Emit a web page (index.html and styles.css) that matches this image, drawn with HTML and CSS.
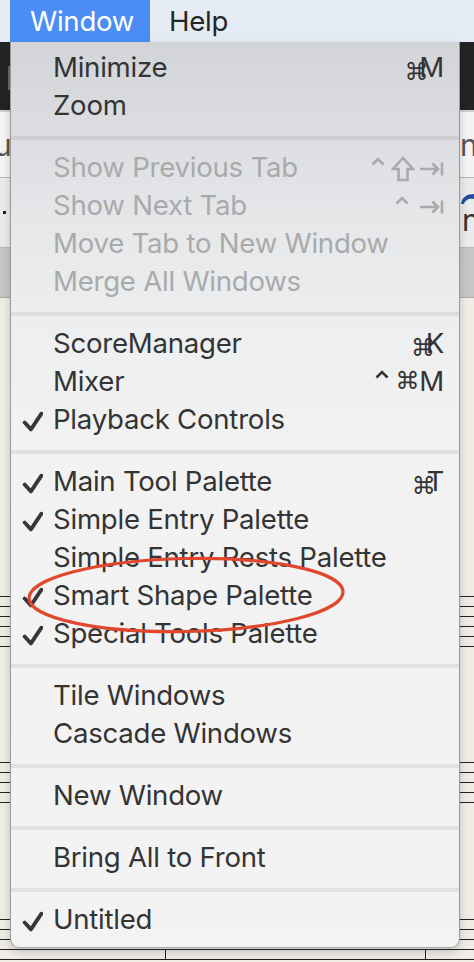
FILE: index.html
```html
<!DOCTYPE html>
<html>
<head>
<meta charset="utf-8">
<link rel="stylesheet" href="styles.css">
</head>
<body>
<div class="menubar">
  <div class="mb-item active">Window</div>
  <div class="mb-item">Help</div>
</div>

<div class="app">
  <div class="toolbar"><div class="tb-knob"></div></div>
  <div class="tabbar">
    <span class="edge-left">u</span>
    <span class="edge-right">ni</span>
  </div>
  <div class="row2">
    <span class="dot"></span>
    <span class="edge-right r2">
      <svg class="blue" width="14" height="14" viewBox="0 0 14 14"><path d="M1 13 C2 6 7 3 14 3 L14 8 C9 7 5 9 4 13 Z" fill="#1f4f9c"/></svg>
      <span class="n">n</span>
    </span>
  </div>
  <div class="grayband"></div>
  <div class="paper">
    <div class="staff s1"></div>
    <div class="staff s2"></div>
    <div class="staff s3"></div>
  </div>
</div>

<div class="menu">
  <div class="item"><span class="chk"></span><span class="label">Minimize</span><span class="sc"><span class="cmd low">⌘</span><span class="k">M</span></span></div>
  <div class="item"><span class="chk"></span><span class="label">Zoom</span><span class="sc"></span></div>
  <div class="sep"></div>
  <div class="item dis"><span class="chk"></span><span class="label">Show Previous Tab</span><span class="sc">
    <svg class="caret" viewBox="0 0 14 9"><path d="M1.5 7.5 L7 2 L12.5 7.5"/></svg>
    <svg class="shift" viewBox="0 0 24 26"><path d="M12 2 L22 13 L16.5 13 L16.5 24 L7.5 24 L7.5 13 L2 13 Z"/></svg>
    <svg class="tab" viewBox="0 0 25 16"><path d="M1 8 L19 8 M13.5 2.5 L19 8 L13.5 13.5 M23 1.5 L23 14.5"/></svg>
  </span></div>
  <div class="item dis"><span class="chk"></span><span class="label">Show Next Tab</span><span class="sc">
    <svg class="caret next" viewBox="0 0 14 9"><path d="M1.5 7.5 L7 2 L12.5 7.5"/></svg>
    <svg class="tab" viewBox="0 0 25 16"><path d="M1 8 L19 8 M13.5 2.5 L19 8 L13.5 13.5 M23 1.5 L23 14.5"/></svg>
  </span></div>
  <div class="item dis"><span class="chk"></span><span class="label">Move Tab to New Window</span><span class="sc"></span></div>
  <div class="item dis"><span class="chk"></span><span class="label">Merge All Windows</span><span class="sc"></span></div>
  <div class="sep"></div>
  <div class="item"><span class="chk"></span><span class="label">ScoreManager</span><span class="sc"><span class="cmd low">⌘</span><span class="k">K</span></span></div>
  <div class="item"><span class="chk"></span><span class="label">Mixer</span><span class="sc">
    <svg class="caret dark" viewBox="0 0 14 9"><path d="M1.5 7.5 L7 2 L12.5 7.5"/></svg>
    <span class="cmd">⌘</span><span class="k">M</span></span></div>
  <div class="item"><span class="chk"><svg viewBox="0 0 20 20"><path d="M2.5 11 L8.5 17.5 L18.5 2.5"/></svg></span><span class="label">Playback Controls</span><span class="sc"></span></div>
  <div class="sep"></div>
  <div class="item"><span class="chk"><svg viewBox="0 0 20 20"><path d="M2.5 11 L8.5 17.5 L18.5 2.5"/></svg></span><span class="label">Main Tool Palette</span><span class="sc"><span class="cmd low">⌘</span><span class="k">T</span></span></div>
  <div class="item"><span class="chk"><svg viewBox="0 0 20 20"><path d="M2.5 11 L8.5 17.5 L18.5 2.5"/></svg></span><span class="label">Simple Entry Palette</span><span class="sc"></span></div>
  <div class="item"><span class="chk"></span><span class="label">Simple Entry Rests Palette</span><span class="sc"></span></div>
  <div class="item"><span class="chk"><svg viewBox="0 0 20 20"><path d="M2.5 11 L8.5 17.5 L18.5 2.5"/></svg></span><span class="label">Smart Shape Palette</span><span class="sc"></span></div>
  <div class="item"><span class="chk"><svg viewBox="0 0 20 20"><path d="M2.5 11 L8.5 17.5 L18.5 2.5"/></svg></span><span class="label">Special Tools Palette</span><span class="sc"></span></div>
  <div class="sep"></div>
  <div class="item"><span class="chk"></span><span class="label">Tile Windows</span><span class="sc"></span></div>
  <div class="item"><span class="chk"></span><span class="label">Cascade Windows</span><span class="sc"></span></div>
  <div class="sep"></div>
  <div class="item"><span class="chk"></span><span class="label">New Window</span><span class="sc"></span></div>
  <div class="sep"></div>
  <div class="item"><span class="chk"></span><span class="label">Bring All to Front</span><span class="sc"></span></div>
  <div class="sep"></div>
  <div class="item"><span class="chk"><svg viewBox="0 0 20 20"><path d="M2.5 11 L8.5 17.5 L18.5 2.5"/></svg></span><span class="label">Untitled</span><span class="sc"></span></div>
</div>

<svg class="circle" width="330" height="90" viewBox="0 0 330 90">
  <ellipse cx="163" cy="45" rx="157" ry="36.5" transform="rotate(-1.2 163 45)" fill="none" stroke="#e0472c" stroke-width="3.2"/>
</svg>
</body>
</html>
```

FILE: styles.css
```css
* { box-sizing: border-box; }
html, body {
  margin: 0;
  padding: 0;
  width: 474px;
  height: 962px;
  overflow: hidden;
  font-family: "Inter", "Liberation Sans", sans-serif;
  -webkit-font-smoothing: antialiased;
}
body { position: relative; background: #efede6; }

/* menu bar */
.menubar {
  height: 42px;
  background: #e5ebf4;
  display: flex;
  padding-left: 10px;
}
.mb-item {
  height: 42px;
  line-height: 42px;
  font-size: 27.6px;
  letter-spacing: -0.25px;
  color: #262626;
  padding: 0 19px;
}
.mb-item.active {
  background: #4b8df5;
  color: #fff;
  padding: 0 20px;
  width: 140px;
}

/* application behind the menu */
.app { display: flex; flex-direction: column; }
.toolbar {
  height: 68px;
  background: #242424;
  padding-top: 24px;
}
.tb-knob { width: 10px; height: 24px; border-right: 2px solid #6a6a6a; }
.tabbar {
  height: 68px;
  background: #f4f4f4;
  border-top: 2px solid #cfcfcf;
  border-bottom: 1px solid #b4b4b4;
  display: flex;
  justify-content: space-between;
  align-items: center;
  font-size: 30px;
  color: #555;
  white-space: nowrap;
}
.edge-left { margin-left: -6px; }
.edge-right { width: 14px; overflow: visible; }
.row2 {
  height: 70px;
  background: #ebebeb;
  border-bottom: 1px solid #b9b9b9;
  display: flex;
  justify-content: space-between;
  align-items: center;
  font-size: 30px;
  color: #333;
  white-space: nowrap;
}
.dot { width: 3px; height: 3px; background: #222; margin-left: 3px; }
.r2 { display: flex; flex-direction: column; align-items: flex-start; }
.n { line-height: 30px; margin-left: 2px; }
.grayband { height: 50px; background: #c7c7c7; border-bottom: 1px solid #aaa; }
.paper {
  flex: 1;
  background: #efede6;
  display: flex;
  flex-direction: column;
}
.staff {
  height: 41px;
  flex-shrink: 0;
  background: repeating-linear-gradient(to bottom, #222 0 1px, transparent 1px 10px);
}
.s1 { margin-top: 298px; height: 51px; }
.s2 { margin-top: 115px; }
.s3 {
  margin-top: 116px;
  background:
    linear-gradient(#222, #222) 165px 30px / 1px 20px no-repeat,
    linear-gradient(#222, #222) 425px 30px / 1px 20px no-repeat,
    repeating-linear-gradient(to bottom, #222 0 1px, transparent 1px 10px);
}

/* dropdown menu */
.menu {
  position: absolute;
  left: 10px;
  top: 42px;
  width: 450px;
  height: 906px;
  padding: 8px 0;
  background: linear-gradient(to bottom, #d3d4d7 0px, #dcdde0 90px, #e7e8ea 190px, #eeeff0 300px, #f2f2f2 420px, #f3f3f3 100%);
  border-left: 1px solid #9a9a9a;
  border-right: 1px solid #9a9a9a;
  border-bottom: 1px solid #a8a8a8;
  border-radius: 0 0 9px 9px;
  box-shadow: 0 4px 10px rgba(0,0,0,0.18);
  display: flex;
  flex-direction: column;
}
.item {
  height: 38px;
  flex-shrink: 0;
  display: grid;
  grid-template-columns: 42px 1fr auto;
  align-items: center;
  padding-right: 15px;
  font-size: 27.6px;
  letter-spacing: -0.25px;
  color: #343434;
  white-space: nowrap;
}
.item.dis { color: #a9aaac; }
.sep {
  flex-shrink: 0;
  height: 4px;
  margin: 10px 0;
  background: rgba(0, 0, 0, 0.065);
}
.label { line-height: 38px; position: relative; top: -2px; }
.chk { display: flex; align-items: center; padding-left: 11px; }
.chk svg {
  width: 21px;
  height: 21px;
  fill: none;
  stroke: #373737;
  stroke-width: 3.6;
  stroke-linecap: round;
  stroke-linejoin: round;
}
.sc {
  display: flex;
  align-items: center;
  font-family: "DejaVu Sans", sans-serif;
  position: relative;
  top: -2px;
}
.sc .k { font-family: "Inter", "Liberation Sans", sans-serif; font-size: 27.6px; }
.cmd { font-size: 24px; }
.cmd.low { position: relative; top: 5px; margin-right: -9px; }
.sc svg { fill: none; stroke: #a9aaac; stroke-width: 2.6; stroke-linejoin: miter; }
.caret { width: 14px; height: 9px; margin-right: 6px; position: relative; top: -6px; }
.caret.next { margin-right: 10px; top: -5px; }
.caret.dark { stroke: #343434; margin-right: 7px; top: -7px; }
.shift { width: 24px; height: 26px; margin-right: 4px; stroke-width: 2.2; position: relative; top: 2px; }
.tab { width: 25px; height: 16px; position: relative; top: 2px; }

/* red annotation */
.circle {
  position: absolute;
  left: 23px;
  top: 550px;
}
```
